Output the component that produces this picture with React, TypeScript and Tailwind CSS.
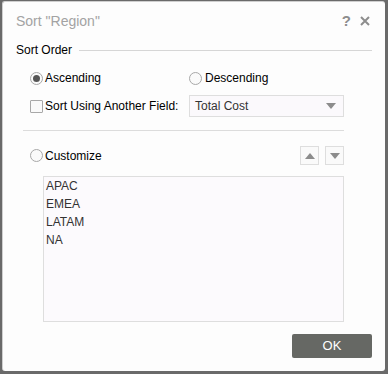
import { useState } from "react";

function Radio({ checked }: { checked?: boolean }) {
  return (
    <span className="w-[13px] h-[13px] rounded-full border border-[#a8a8a8] bg-[#fafafa] flex items-center justify-center shrink-0">
      {checked && <span className="w-[7px] h-[7px] rounded-full bg-[#555]" />}
    </span>
  );
}

function Arrow({ up }: { up?: boolean }) {
  return (
    <svg width="10" height="6" viewBox="0 0 10 6">
      <path d={up ? "M0 6 L5 0 L10 6 Z" : "M0 0 L10 0 L5 6 Z"} fill="#8c8c8c" />
    </svg>
  );
}

export default function App() {
  const [order, setOrder] = useState("asc");
  const items = ["APAC", "EMEA", "LATAM", "NA"];

  return (
    <div className="w-[388px] h-[374px] bg-[#6a6a6a] pl-[2px] pt-px pr-[3px] pb-[3px] font-['Liberation_Sans',Arial,sans-serif]">
      <div className="w-full h-full bg-[#fdfdfd] rounded-[3px] border-t border-l border-[#cfcfcf] flex flex-col">
        <div className="h-[38px] flex items-center pl-[13px] pr-[15px]">
          <span className="text-[14px] text-[#a3a3a3] flex-1">Sort "Region"</span>
          <span className="text-[15px] font-bold text-[#8d8d8d] mr-[9px]">?</span>
          <svg width="10" height="10" viewBox="0 0 10 10">
            <path d="M1 1 L9 9 M9 1 L1 9" stroke="#8d8d8d" strokeWidth="2" />
          </svg>
        </div>
        <div className="flex items-center pl-[13px] pr-[13px] h-[20px]">
          <span className="text-[12px] text-black">Sort Order</span>
          <div className="flex-1 h-px bg-[#d6d6d6] ml-[7px]" />
        </div>
        <div className="pl-[27px] pr-[41px]">
          <div className="flex items-center h-[16px] mt-[10px]">
            <button className="flex items-center gap-[2px] w-[159px]" onClick={() => setOrder("asc")}>
              <Radio checked={order === "asc"} />
              <span className="text-[12px] text-black">Ascending</span>
            </button>
            <button className="flex items-center gap-[3px]" onClick={() => setOrder("desc")}>
              <Radio checked={order === "desc"} />
              <span className="text-[12px] text-black">Descending</span>
            </button>
          </div>
          <div className="flex items-center mt-[9px]">
            <div className="flex items-center gap-[2px] w-[159px]">
              <span className="w-[13px] h-[13px] border border-[#a8a8a8] bg-[#fafafa] rounded-[1px] shrink-0" />
              <span className="text-[12px] text-black">Sort Using Another Field:</span>
            </div>
            <div className="flex-1 h-[22px] border border-[#dedede] bg-[#fbf9fc] flex items-center pl-[5px] pr-[7px]">
              <span className="flex-1 text-[12px] text-[#333]">Total Cost</span>
              <Arrow />
            </div>
          </div>
          <div className="h-px bg-[#dcdcdc] mt-[13px] ml-[-7px]" />
          <div className="flex items-center mt-[15px]">
            <button className="flex items-center gap-[2px] flex-1" onClick={() => setOrder("custom")}>
              <Radio checked={order === "custom"} />
              <span className="text-[12px] text-black">Customize</span>
            </button>
            <div className="w-[19px] h-[19px] border border-[#dedede] bg-[#fafafa] flex items-center justify-center">
              <Arrow up />
            </div>
            <div className="w-[19px] h-[19px] border border-[#dedede] bg-[#fafafa] flex items-center justify-center ml-[6px]">
              <Arrow />
            </div>
          </div>
          <div className="ml-[13px] mt-[11px] h-[146px] border border-[#dedede] bg-[#fcfafd] pl-[2px]">
            {items.map((it) => (
              <div key={it} className="h-[18px] flex items-center text-[12px] text-[#333]">
                {it}
              </div>
            ))}
          </div>
        </div>
        <div className="flex justify-end pr-[13px] mt-[12px]">
          <button className="w-[80px] h-[24px] bg-[#666864] rounded-[2px] text-white text-[13px]">OK</button>
        </div>
      </div>
    </div>
  );
}
